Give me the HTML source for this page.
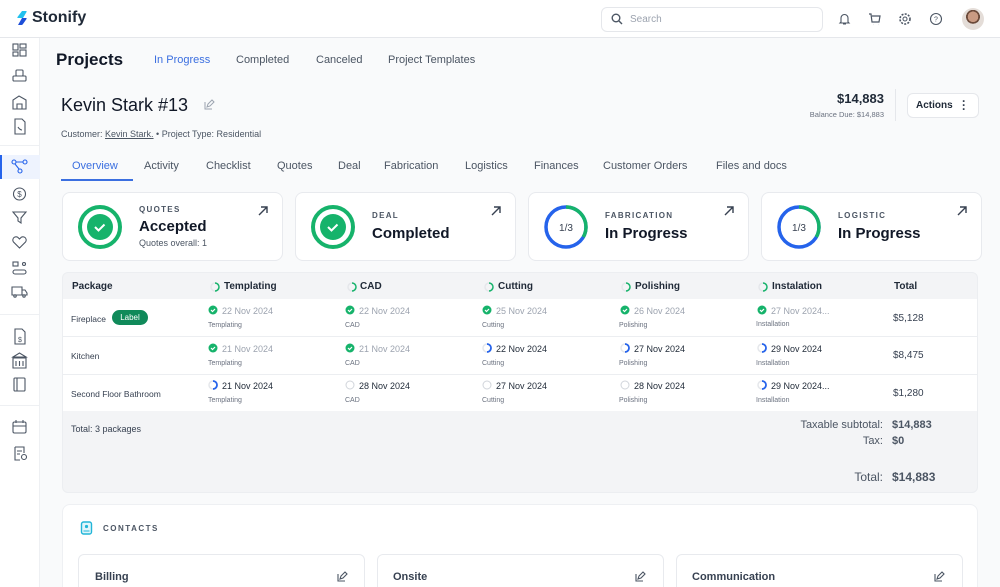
<!DOCTYPE html>
<html><head><meta charset="utf-8"><style>
*{box-sizing:border-box;margin:0;padding:0}
html,body{width:1000px;height:587px;overflow:hidden}
body{background:#f9fafb;font-family:"Liberation Sans",sans-serif;color:#111827;position:relative}
.a{position:absolute}
.hdr{left:0;top:0;width:1000px;height:38px;background:#fff;border-bottom:1px solid #e5e7eb}
.side{left:0;top:38px;width:40px;height:549px;background:#fff;border-right:1px solid #eef0f3}
.card{background:#fff;border:1px solid #e8eaee;border-radius:8px}
.lbl{font-size:8px;letter-spacing:1.3px;color:#4b5563;font-weight:bold}
.big{font-size:15px;font-weight:bold;color:#111827}
.th{font-size:10px;font-weight:bold;color:#1f2937}
.d{font-size:9px;color:#9ca3af}
.dd{font-size:9px;color:#1f2937}
.sub{font-size:7px;color:#6b7280}
.pk{font-size:8.5px;color:#374151}
svg{display:block}
</style></head><body>
<div class="a hdr"></div>
<svg class="a" style="left:16px;top:11px" width="12" height="14" viewBox="0 0 12 14"><path d="M6 0 L10 0 Q11 0 10.5 1 L7 7 L2 7 Q1 7 1.5 6Z" fill="#22c1ee"/><path d="M6 7 L10 7 Q11 7 10.5 8 L7 13 Q6.5 14 5.5 14 L2 14Z" fill="#1d4ed8"/></svg>
<div class="a" style="left:32px;top:9px;font-size:16px;font-weight:bold;color:#1f2937">Stonify</div>
<div class="a" style="left:601px;top:7px;width:222px;height:25px;border:1px solid #e5e7eb;border-radius:6px;background:#fff"></div>
<svg class="a" style="left:611px;top:13px" width="12" height="12" viewBox="0 0 12 12"><circle cx="5" cy="5" r="3.8" stroke="#4b5563" stroke-width="1.4" fill="none"/><path d="M8 8l3 3" stroke="#4b5563" stroke-width="1.4"/></svg>
<div class="a" style="left:630px;top:14px;font-size:10px;color:#9ca3af">Search</div>
<svg class="a" style="left:838px;top:12px" width="13" height="14" viewBox="0 0 13 14"><path d="M3 10V6a3.5 3.5 0 017 0v4l1 1H2z M5 12h3" stroke="#4b5563" fill="none" stroke-width="1.1"/></svg>
<svg class="a" style="left:868px;top:12px" width="13" height="14" viewBox="0 0 13 14"><path d="M1 2h2l1 8h7l1-6H4 M5 12.5h.1 M10 12.5h.1" stroke="#4b5563" fill="none" stroke-width="1.2"/></svg>
<svg class="a" style="left:898px;top:12px" width="14" height="14" viewBox="0 0 14 14"><circle cx="7" cy="7" r="5" stroke="#4b5563" fill="none" stroke-width="1.6" stroke-dasharray="2 1.3"/><circle cx="7" cy="7" r="2" stroke="#4b5563" fill="none"/></svg>
<svg class="a" style="left:929px;top:12px" width="14" height="14" viewBox="0 0 14 14"><circle cx="7" cy="7" r="5.5" stroke="#4b5563" fill="none" stroke-width="1.1"/><text x="7" y="9.5" font-size="7" text-anchor="middle" fill="#4b5563" font-family="Liberation Sans">?</text></svg>
<div class="a" style="left:962px;top:8px;width:22px;height:22px;border-radius:50%;background:radial-gradient(circle at 50% 40%,#c99a82 0 30%,#6b4a3a 31% 40%,#e4ddd8 41%)"></div>

<div class="a side"></div>
<div class="a" style="left:0;top:145px;width:40px;height:1px;background:#eef0f3"></div>
<div class="a" style="left:0;top:314px;width:40px;height:1px;background:#eef0f3"></div>
<div class="a" style="left:0;top:405px;width:40px;height:1px;background:#eef0f3"></div>
<div class="a" style="left:0;top:155px;width:40px;height:24px;background:#eef3fe"></div>
<div class="a" style="left:0;top:155px;width:2px;height:24px;background:#2563eb"></div>
<svg class="a" width="40" height="470" style="left:0;top:40px" fill="none" stroke="#4b5563" stroke-width="1.1">
<rect x="13" y="4" width="5" height="6"/><rect x="20" y="4" width="6" height="4"/><rect x="13" y="12" width="5" height="4"/><rect x="20" y="10" width="6" height="6"/>
<rect x="13" y="36" width="13" height="5" rx="1"/><rect x="16" y="30" width="7" height="6" rx="1"/>
<path d="M13 69v-9l6-4 7 4v9z M17 69v-5h5v5"/>
<path d="M15 79h7l3 3v12H15z M18 87c1 2 3 3 4 3"/>
<circle cx="14" cy="122" r="2" stroke="#2563eb"/><circle cx="25" cy="122" r="2" stroke="#2563eb"/><circle cx="20" cy="131" r="2" stroke="#2563eb"/><path d="M16 122h7 M15 124l4 5" stroke="#2563eb"/>
<circle cx="19.5" cy="154" r="6"/><text x="19.5" y="157" font-size="8" text-anchor="middle" fill="#4b5563" stroke="none">$</text>
<path d="M13 172h13l-5 6v5l-3-2v-3z"/>
<path d="M19.5 208l-6-6a3 3 0 015-4l1 1 1-1a3 3 0 015 4z"/>
<rect x="13" y="222" width="5" height="4"/><circle cx="24" cy="224" r="1.5"/><rect x="13" y="230" width="13" height="4" rx="2"/>
<path d="M12 247h10v8H12z M22 250h3l2 3v2h-5"/><circle cx="15" cy="256" r="1.2"/><circle cx="24" cy="256" r="1.2"/>
<path d="M15 289h7l3 3v12H15z"/><text x="20" y="302" font-size="7" text-anchor="middle" fill="#4b5563" stroke="none">$</text>
<path d="M13 317l6.5-4 6.5 4z M13 318h13v10H13z M16 321v5 M19.5 321v5 M23 321v5"/>
<rect x="14" y="338" width="11" height="13" rx="1"/><path d="M17 338v13"/>
<rect x="13" y="382" width="13" height="11" rx="1.5"/><path d="M13 386h13 M16 380v3 M23 380v3"/>
<path d="M15 407h9v6 M15 407v13h5 M17 411h5 M17 414h3"/><circle cx="24" cy="417" r="2.5"/>
</svg>

<div class="a" style="left:56px;top:50px;font-size:17px;font-weight:bold;color:#111827">Projects</div>
<div class="a" style="left:154px;top:54px;font-size:11px;color:#3b6fe0">In Progress</div>
<div class="a" style="left:236px;top:54px;font-size:11px;color:#4b5563">Completed</div>
<div class="a" style="left:316px;top:54px;font-size:11px;color:#4b5563">Canceled</div>
<div class="a" style="left:388px;top:54px;font-size:11px;color:#4b5563">Project Templates</div>

<div class="a" style="left:61px;top:95px;font-size:18px;color:#111827">Kevin Stark #13</div>
<svg class="a" style="left:203px;top:99px" width="12" height="12" viewBox="0 0 12 12" fill="none" stroke="#9ca3af"><path d="M2 3v7h7 M4 8l1-3 4-4 2 2-4 4z"/></svg>
<div class="a" style="left:61px;top:129px;font-size:9px;color:#4b5563">Customer: <span style="text-decoration:underline">Kevin Stark.</span> • Project Type: Residential</div>
<div class="a" style="left:780px;top:91px;width:104px;text-align:right;font-size:13px;font-weight:bold;color:#1f2937">$14,883</div>
<div class="a" style="left:780px;top:110px;width:104px;text-align:right;font-size:7.5px;color:#6b7280">Balance Due: $14,883</div>
<div class="a" style="left:895px;top:89px;width:1px;height:32px;background:#e5e7eb"></div>
<div class="a" style="left:907px;top:93px;width:72px;height:25px;background:#fff;border:1px solid #e5e7eb;border-radius:6px;font-size:10px;font-weight:bold;color:#1f2937;padding:6px 0 0 8px">Actions</div>
<div class="a" style="left:962px;top:99px;font-size:12px;font-weight:bold;line-height:4px;color:#374151">·<br>·<br>·</div>

<div class="a" style="left:72px;top:160px;font-size:11px;color:#3b6fe0">Overview</div>
<div class="a" style="left:61px;top:179px;width:72px;height:2px;background:#3b6fe0"></div>
<div class="a" style="left:144px;top:160px;font-size:11px;color:#4b5563">Activity</div>
<div class="a" style="left:206px;top:160px;font-size:11px;color:#4b5563">Checklist</div>
<div class="a" style="left:277px;top:160px;font-size:11px;color:#4b5563">Quotes</div>
<div class="a" style="left:338px;top:160px;font-size:11px;color:#4b5563">Deal</div>
<div class="a" style="left:384px;top:160px;font-size:11px;color:#4b5563">Fabrication</div>
<div class="a" style="left:465px;top:160px;font-size:11px;color:#4b5563">Logistics</div>
<div class="a" style="left:534px;top:160px;font-size:11px;color:#4b5563">Finances</div>
<div class="a" style="left:603px;top:160px;font-size:11px;color:#4b5563">Customer Orders</div>
<div class="a" style="left:716px;top:160px;font-size:11px;color:#4b5563">Files and docs</div>

<div class="a card" style="left:62px;top:192px;width:221px;height:69px"></div>
<div class="a card" style="left:295px;top:192px;width:221px;height:69px"></div>
<div class="a card" style="left:528px;top:192px;width:221px;height:69px"></div>
<div class="a card" style="left:761px;top:192px;width:221px;height:69px"></div>
<svg class="a" style="left:77px;top:204px" width="46" height="46"><circle cx="23" cy="23" r="20" stroke="#16b36b" stroke-width="4" fill="none"/><circle cx="23" cy="23" r="13" fill="#16b36b"/><path d="M18 23l3.5 3.5 6-6" stroke="#fff" stroke-width="2" fill="none"/></svg>
<svg class="a" style="left:310px;top:204px" width="46" height="46"><circle cx="23" cy="23" r="20" stroke="#16b36b" stroke-width="4" fill="none"/><circle cx="23" cy="23" r="13" fill="#16b36b"/><path d="M18 23l3.5 3.5 6-6" stroke="#fff" stroke-width="2" fill="none"/></svg>
<svg class="a" style="left:543px;top:204px" width="46" height="46"><circle cx="23" cy="23" r="20" stroke="#2563eb" stroke-width="3.5" fill="none"/><path d="M23 3A20 20 0 0 1 40.3 33" stroke="#16b36b" stroke-width="3.5" fill="none"/><text x="23" y="27" font-size="10" text-anchor="middle" fill="#374151" font-family="Liberation Sans">1/3</text></svg>
<svg class="a" style="left:776px;top:204px" width="46" height="46"><circle cx="23" cy="23" r="20" stroke="#2563eb" stroke-width="3.5" fill="none"/><path d="M23 3A20 20 0 0 1 40.3 33" stroke="#16b36b" stroke-width="3.5" fill="none"/><text x="23" y="27" font-size="10" text-anchor="middle" fill="#374151" font-family="Liberation Sans">1/3</text></svg>
<div class="a lbl" style="left:139px;top:205px">QUOTES</div>
<div class="a big" style="left:139px;top:218px">Accepted</div>
<div class="a" style="left:139px;top:238px;font-size:9px;color:#4b5563">Quotes overall: 1</div>
<div class="a lbl" style="left:372px;top:211px">DEAL</div>
<div class="a big" style="left:372px;top:225px">Completed</div>
<div class="a lbl" style="left:605px;top:211px">FABRICATION</div>
<div class="a big" style="left:605px;top:225px">In Progress</div>
<div class="a lbl" style="left:838px;top:211px">LOGISTIC</div>
<div class="a big" style="left:838px;top:225px">In Progress</div>
<svg class="a" style="left:258px;top:206px" width="10" height="10" fill="none" stroke="#374151" stroke-width="1.4"><path d="M1 9L9 1M3 1h6v6"/></svg>
<svg class="a" style="left:491px;top:206px" width="10" height="10" fill="none" stroke="#374151" stroke-width="1.4"><path d="M1 9L9 1M3 1h6v6"/></svg>
<svg class="a" style="left:724px;top:206px" width="10" height="10" fill="none" stroke="#374151" stroke-width="1.4"><path d="M1 9L9 1M3 1h6v6"/></svg>
<svg class="a" style="left:957px;top:206px" width="10" height="10" fill="none" stroke="#374151" stroke-width="1.4"><path d="M1 9L9 1M3 1h6v6"/></svg>

<div class="a" style="left:62px;top:272px;width:916px;height:221px;background:#f3f4f6;border-radius:6px;border:1px solid #eceef1"></div>
<div class="a" style="left:63px;top:299px;width:914px;height:112px;background:#fff"></div>
<div class="a" style="left:63px;top:336px;width:914px;height:1px;background:#eceef1"></div>
<div class="a" style="left:63px;top:374px;width:914px;height:1px;background:#eceef1"></div>
<div class="a th" style="left:72px;top:281px">Package</div>
<div class="a th" style="left:224px;top:281px">Templating</div>
<div class="a th" style="left:360px;top:281px">CAD</div>
<div class="a th" style="left:498px;top:281px">Cutting</div>
<div class="a th" style="left:635px;top:281px">Polishing</div>
<div class="a th" style="left:772px;top:281px">Instalation</div>
<div class="a th" style="left:894px;top:281px">Total</div>
<svg class="a" width="1000" height="420" style="left:0;top:0" fill="none">
<defs>
<g id="hd"><circle r="4" stroke="#e5e7eb" stroke-width="1.5"/><path d="M0-4A4 4 0 0 1 0 4" stroke="#16b36b" stroke-width="1.5"/></g>
<g id="ok"><circle r="4.5" fill="#16b36b"/><path d="M-2 0l1.5 1.5 2.5-2.5" stroke="#fff" stroke-width="1.2"/></g>
<g id="pr"><circle r="4" stroke="#e5e7eb" stroke-width="1.5"/><path d="M0-4A4 4 0 0 1 0 4" stroke="#2563eb" stroke-width="1.8"/></g>
<g id="em"><circle r="4" stroke="#d1d5db" stroke-width="1"/></g>
</defs>
<use href="#hd" x="215" y="287"/><use href="#hd" x="352" y="287"/><use href="#hd" x="489" y="287"/><use href="#hd" x="626" y="287"/><use href="#hd" x="763" y="287"/>
<use href="#ok" x="213" y="310"/><use href="#ok" x="350" y="310"/><use href="#ok" x="487" y="310"/><use href="#ok" x="625" y="310"/><use href="#ok" x="762" y="310"/>
<use href="#ok" x="213" y="348"/><use href="#ok" x="350" y="348"/><use href="#pr" x="487" y="348"/><use href="#pr" x="625" y="348"/><use href="#pr" x="762" y="348"/>
<use href="#pr" x="213" y="385"/><use href="#em" x="350" y="385"/><use href="#em" x="487" y="385"/><use href="#em" x="625" y="385"/><use href="#pr" x="762" y="385"/>
</svg>
<div class="a pk" style="left:71px;top:314px">Fireplace</div>
<div class="a" style="left:112px;top:310px;width:36px;height:15px;border-radius:8px;background:#108a5a;color:#fff;font-size:8px;text-align:center;line-height:15px">Label</div>
<div class="a pk" style="left:71px;top:351px">Kitchen</div>
<div class="a pk" style="left:71px;top:389px">Second Floor Bathroom</div>
<div class="a d" style="left:222px;top:306px">22 Nov 2024</div><div class="a sub" style="left:208px;top:322px">Templating</div>
<div class="a d" style="left:359px;top:306px">22 Nov 2024</div><div class="a sub" style="left:345px;top:322px">CAD</div>
<div class="a d" style="left:496px;top:306px">25 Nov 2024</div><div class="a sub" style="left:482px;top:322px">Cutting</div>
<div class="a d" style="left:634px;top:306px">26 Nov 2024</div><div class="a sub" style="left:619px;top:322px">Polishing</div>
<div class="a d" style="left:771px;top:306px">27 Nov 2024...</div><div class="a sub" style="left:756px;top:321px">Installation</div>
<div class="a d" style="left:222px;top:344px">21 Nov 2024</div><div class="a sub" style="left:208px;top:360px">Templating</div>
<div class="a d" style="left:359px;top:344px">21 Nov 2024</div><div class="a sub" style="left:345px;top:360px">CAD</div>
<div class="a dd" style="left:496px;top:344px">22 Nov 2024</div><div class="a sub" style="left:482px;top:360px">Cutting</div>
<div class="a dd" style="left:634px;top:344px">27 Nov 2024</div><div class="a sub" style="left:619px;top:360px">Polishing</div>
<div class="a dd" style="left:771px;top:344px">29 Nov 2024</div><div class="a sub" style="left:756px;top:360px">Installation</div>
<div class="a dd" style="left:222px;top:381px">21 Nov 2024</div><div class="a sub" style="left:208px;top:397px">Templating</div>
<div class="a dd" style="left:359px;top:381px">28 Nov 2024</div><div class="a sub" style="left:345px;top:397px">CAD</div>
<div class="a dd" style="left:496px;top:381px">27 Nov 2024</div><div class="a sub" style="left:482px;top:397px">Cutting</div>
<div class="a dd" style="left:634px;top:381px">28 Nov 2024</div><div class="a sub" style="left:619px;top:397px">Polishing</div>
<div class="a dd" style="left:771px;top:381px">29 Nov 2024...</div><div class="a sub" style="left:756px;top:397px">Installation</div>
<div class="a" style="left:893px;top:313px;font-size:10px;color:#374151">$5,128</div>
<div class="a" style="left:893px;top:350px;font-size:10px;color:#374151">$8,475</div>
<div class="a" style="left:893px;top:388px;font-size:10px;color:#374151">$1,280</div>
<div class="a" style="left:71px;top:424px;font-size:9px;color:#374151">Total: 3 packages</div>
<div class="a" style="left:760px;top:419px;width:123px;text-align:right;font-size:11px;color:#4b5563">Taxable subtotal:</div>
<div class="a" style="left:892px;top:419px;font-size:11px;font-weight:bold;color:#4b5563">$14,883</div>
<div class="a" style="left:760px;top:435px;width:123px;text-align:right;font-size:11px;color:#4b5563">Tax:</div>
<div class="a" style="left:892px;top:435px;font-size:11px;font-weight:bold;color:#4b5563">$0</div>
<div class="a" style="left:760px;top:470px;width:123px;text-align:right;font-size:12px;color:#4b5563">Total:</div>
<div class="a" style="left:892px;top:470px;font-size:12px;font-weight:bold;color:#4b5563">$14,883</div>

<div class="a" style="left:62px;top:504px;width:916px;height:100px;background:#fff;border:1px solid #eef0f3;border-radius:8px"></div>
<svg class="a" style="left:80px;top:521px" width="13" height="14"><rect x="1.5" y="1" width="10" height="12" rx="2" stroke="#22b5d8" stroke-width="1.4" fill="#e0f6fb"/><circle cx="6.5" cy="5.5" r="1.6" fill="#22b5d8"/><path d="M3.5 10h6" stroke="#22b5d8"/></svg>
<div class="a lbl" style="left:103px;top:524px;letter-spacing:1.5px">CONTACTS</div>
<div class="a" style="left:78px;top:554px;width:287px;height:50px;border:1px solid #e8eaee;border-radius:6px;background:#fff"></div>
<div class="a" style="left:377px;top:554px;width:287px;height:50px;border:1px solid #e8eaee;border-radius:6px;background:#fff"></div>
<div class="a" style="left:676px;top:554px;width:287px;height:50px;border:1px solid #e8eaee;border-radius:6px;background:#fff"></div>
<div class="a" style="left:95px;top:571px;font-size:11px;font-weight:bold;color:#374151">Billing</div>
<div class="a" style="left:393px;top:571px;font-size:11px;font-weight:bold;color:#374151">Onsite</div>
<div class="a" style="left:692px;top:571px;font-size:11px;font-weight:bold;color:#374151">Communication</div>
<svg class="a" style="left:336px;top:571px" width="12" height="12" fill="none" stroke="#4b5563" stroke-width="1.1"><path d="M2 3v7h7 M4 8l1-3 4-4 2 2-4 4z"/></svg>
<svg class="a" style="left:634px;top:571px" width="12" height="12" fill="none" stroke="#4b5563" stroke-width="1.1"><path d="M2 3v7h7 M4 8l1-3 4-4 2 2-4 4z"/></svg>
<svg class="a" style="left:933px;top:571px" width="12" height="12" fill="none" stroke="#4b5563" stroke-width="1.1"><path d="M2 3v7h7 M4 8l1-3 4-4 2 2-4 4z"/></svg>
</body></html>
